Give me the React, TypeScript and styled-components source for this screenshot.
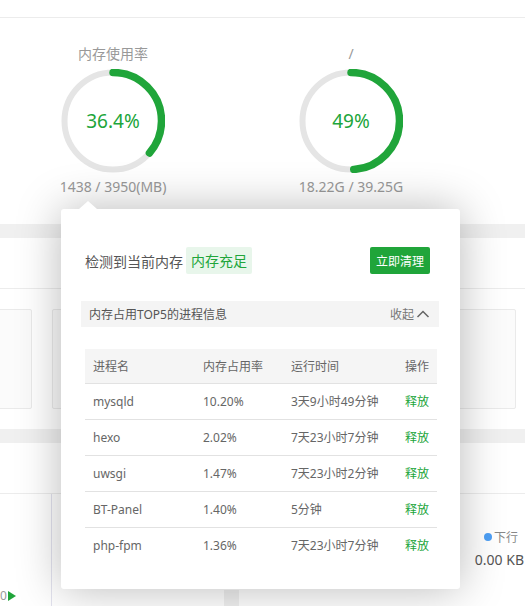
import React from "react";
import styled, { createGlobalStyle } from "styled-components";

const GREEN = "#20a53a";

const GlobalStyle = createGlobalStyle`
  html, body {
    margin: 0;
    padding: 0;
    background: #f0f0f0;
    overflow: hidden;
  }
  body {
    font-family: "Noto Sans", "Noto Sans CJK SC", sans-serif;
    color: #555;
  }
`;

const Page = styled.div`
  position: relative;
  width: 525px;
  height: 606px;
  overflow: hidden;
  background: #f0f0f0;
`;

const TopBar = styled.div`
  height: 17px;
  background: #fff;
  border-bottom: 1px solid #ececec;
`;

const GaugeSection = styled.div`
  height: 206px;
  background: #fff;
  display: flex;
  gap: 120px;
  padding-left: 54px;
  box-sizing: border-box;
  padding-top: 26px;
  margin-bottom: 14px;
`;

const GaugeItem = styled.div`
  width: 118px;
  display: flex;
  flex-direction: column;
  align-items: center;
`;

const GaugeTitle = styled.div`
  font-size: 14px;
  line-height: 20px;
  color: #999;
  white-space: nowrap;
`;

const GaugeRing = styled.div`
  position: relative;
  width: 104px;
  height: 104px;
  margin-top: 5px;
`;

const GaugeValue = styled.div`
  position: absolute;
  inset: 0;
  display: flex;
  align-items: center;
  justify-content: center;
  font-size: 19px;
  color: ${GREEN};
`;

const GaugeFoot = styled.div`
  margin-top: 4px;
  font-size: 14px;
  line-height: 20px;
  color: #999;
  white-space: nowrap;
`;

const Card = styled.div`
  background: #fff;
  margin-bottom: 14px;
`;

const CardHead = styled.div`
  height: 50px;
  border-bottom: 1px solid #ececec;
`;

const BoxGrid = styled.div`
  display: flex;
  gap: 20px;
  padding: 20px 0 20px 0;
  margin-left: -190px;
`;

const StatBox = styled.div`
  width: 220px;
  height: 98px;
  flex-shrink: 0;
  border: 1px solid #eaeaea;
  border-radius: 2px;
  background: #fbfbfb;
`;

const ChartCard = styled.div`
  background: #fff;
`;

const ChartBody = styled.div`
  display: flex;
  height: 113px;
`;

const Axis = styled.div`
  width: 52px;
  border-right: 1px solid #e3e3ef;
  display: flex;
  flex-direction: column;
  justify-content: flex-end;
  padding-bottom: 3px;
  box-sizing: border-box;
`;

const AxisMark = styled.div`
  display: flex;
  align-items: center;
  gap: 1px;
  font-size: 12px;
  color: #999;
`;

const Triangle = styled.span`
  width: 0;
  height: 0;
  border-top: 5px solid transparent;
  border-bottom: 5px solid transparent;
  border-left: 8px solid ${GREEN};
`;

const ChartArea = styled.div`
  flex: 1;
  display: flex;
  flex-direction: column;
`;

const ChartTop = styled.div`
  height: 96px;
  display: flex;
  justify-content: flex-end;
  align-items: flex-start;
  padding-top: 34px;
  box-sizing: border-box;
`;

const Legend = styled.div`
  display: flex;
  flex-direction: column;
  align-items: flex-end;
  gap: 4px;
  margin-right: 1px;
`;

const LegendLabel = styled.div`
  display: flex;
  align-items: center;
  gap: 2px;
  font-size: 12px;
  color: #888;
  margin-right: 6px;
`;

const Dot = styled.span`
  width: 8px;
  height: 8px;
  border-radius: 50%;
  background: #4d9ff5;
`;

const LegendValue = styled.div`
  font-size: 14px;
  color: #555;
`;

const ChartBottom = styled.div`
  flex: 1;
  display: flex;
`;

const Gutter = styled.div<{ $w: number; $gray?: boolean }>`
  width: ${(p) => p.$w}px;
  background: ${(p) => (p.$gray ? "#f0f0f0" : "#fff")};
`;

/* popover */

const Popover = styled.div`
  position: absolute;
  left: 61px;
  top: 209px;
  width: 399px;
  height: 380px;
  background: #fff;
  border-radius: 3px;
  box-shadow: 0 0 45px rgba(0, 0, 0, 0.28);
  padding: 38px 21px 0 20px;
  box-sizing: border-box;

  &::before {
    content: "";
    position: absolute;
    left: 18px;
    top: -8px;
    border-left: 9px solid transparent;
    border-right: 9px solid transparent;
    border-bottom: 8px solid #fff;
  }
`;

const StatusRow = styled.div`
  display: flex;
  align-items: center;
  padding: 0 9px 0 4px;
  height: 27px;
`;

const StatusText = styled.span`
  font-size: 14px;
  color: #555;
`;

const Tag = styled.span`
  margin-left: 3px;
  height: 27px;
  line-height: 27px;
  padding: 0 5px;
  background: #e8f6eb;
  border-radius: 2px;
  color: ${GREEN};
  font-size: 14px;
`;

const CleanButton = styled.button`
  margin-left: auto;
  height: 27px;
  padding: 0 6px;
  border: none;
  border-radius: 2px;
  background: ${GREEN};
  color: #fff;
  font-family: inherit;
  font-size: 12px;
  cursor: pointer;
`;

const SubHeader = styled.div`
  margin-top: 27px;
  height: 26px;
  background: #f4f4f4;
  display: flex;
  align-items: center;
  justify-content: space-between;
  padding: 0 9px 0 8px;
  font-size: 12px;
  color: #555;
`;

const Collapse = styled.span`
  display: flex;
  align-items: center;
  gap: 2px;
  color: #777;
`;

const Table = styled.table`
  margin: 22px 2px 0 4px;
  width: 352px;
  border-collapse: collapse;
  table-layout: fixed;
  font-size: 12px;
  color: #666;
`;

const Th = styled.th<{ $w: number }>`
  width: ${(p) => p.$w}px;
  height: 34px;
  padding: 0 0 0 8px;
  text-align: left;
  font-weight: normal;
  background: #f5f5f5;
  border-bottom: 1px solid #e2e2e2;
  box-sizing: border-box;
`;

const Tr = styled.tr`
  &:not(:last-child) td {
    border-bottom: 1px solid #e2e2e2;
  }
`;

const Td = styled.td`
  height: 35px;
  padding: 0 0 0 8px;
  white-space: nowrap;
`;

const Release = styled.a`
  color: ${GREEN};
  cursor: pointer;
`;

const R = 48.5;
const C = 2 * Math.PI * R;

const Gauge = ({
  title,
  value,
  percent,
  foot,
}: {
  title: string;
  value: string;
  percent: number;
  foot: string;
}) => (
  <GaugeItem>
    <GaugeTitle>{title}</GaugeTitle>
    <GaugeRing>
      <svg width="104" height="104" viewBox="0 0 104 104">
        <circle cx="52" cy="52" r={R} fill="none" stroke="#e5e5e5" strokeWidth="6" />
        <circle
          cx="52"
          cy="52"
          r={R}
          fill="none"
          stroke={GREEN}
          strokeWidth="7.5"
          strokeLinecap="round"
          strokeDasharray={`${(C * percent) / 100} ${C}`}
          transform="rotate(-90 52 52)"
        />
      </svg>
      <GaugeValue>{value}</GaugeValue>
    </GaugeRing>
    <GaugeFoot>{foot}</GaugeFoot>
  </GaugeItem>
);

const processes = [
  { name: "mysqld", mem: "10.20%", time: "3天9小时49分钟" },
  { name: "hexo", mem: "2.02%", time: "7天23小时7分钟" },
  { name: "uwsgi", mem: "1.47%", time: "7天23小时2分钟" },
  { name: "BT-Panel", mem: "1.40%", time: "5分钟" },
  { name: "php-fpm", mem: "1.36%", time: "7天23小时7分钟" },
];

export default function App() {
  return (
    <Page>
      <GlobalStyle />
      <TopBar />
      <GaugeSection>
        <Gauge title="内存使用率" value="36.4%" percent={36.4} foot="1438 / 3950(MB)" />
        <Gauge title="/" value="49%" percent={49} foot="18.22G / 39.25G" />
      </GaugeSection>

      <Card>
        <CardHead />
        <BoxGrid>
          <StatBox />
          <StatBox />
          <StatBox />
        </BoxGrid>
      </Card>

      <ChartCard>
        <CardHead />
        <ChartBody>
          <Axis>
            <AxisMark>
              0<Triangle />
            </AxisMark>
          </Axis>
          <ChartArea>
            <ChartTop>
              <Legend>
                <LegendLabel>
                  <Dot />
                  下行
                </LegendLabel>
                <LegendValue>0.00 KB</LegendValue>
              </Legend>
            </ChartTop>
            <ChartBottom>
              <Gutter $w={172} />
              <Gutter $w={15} $gray />
            </ChartBottom>
          </ChartArea>
        </ChartBody>
      </ChartCard>

      <Popover>
        <StatusRow>
          <StatusText>检测到当前内存</StatusText>
          <Tag>内存充足</Tag>
          <CleanButton>立即清理</CleanButton>
        </StatusRow>
        <SubHeader>
          <span>内存占用TOP5的进程信息</span>
          <Collapse>
            收起
            <svg width="14" height="14" viewBox="0 0 14 14">
              <polyline
                points="1.5,10 7,4.5 12.5,10"
                fill="none"
                stroke="#666"
                strokeWidth="1.5"
              />
            </svg>
          </Collapse>
        </SubHeader>
        <Table>
          <thead>
            <tr>
              <Th $w={110}>进程名</Th>
              <Th $w={88}>内存占用率</Th>
              <Th $w={114}>运行时间</Th>
              <Th $w={40}>操作</Th>
            </tr>
          </thead>
          <tbody>
            {processes.map((p) => (
              <Tr key={p.name}>
                <Td>{p.name}</Td>
                <Td>{p.mem}</Td>
                <Td>{p.time}</Td>
                <Td>
                  <Release>释放</Release>
                </Td>
              </Tr>
            ))}
          </tbody>
        </Table>
      </Popover>
    </Page>
  );
}
